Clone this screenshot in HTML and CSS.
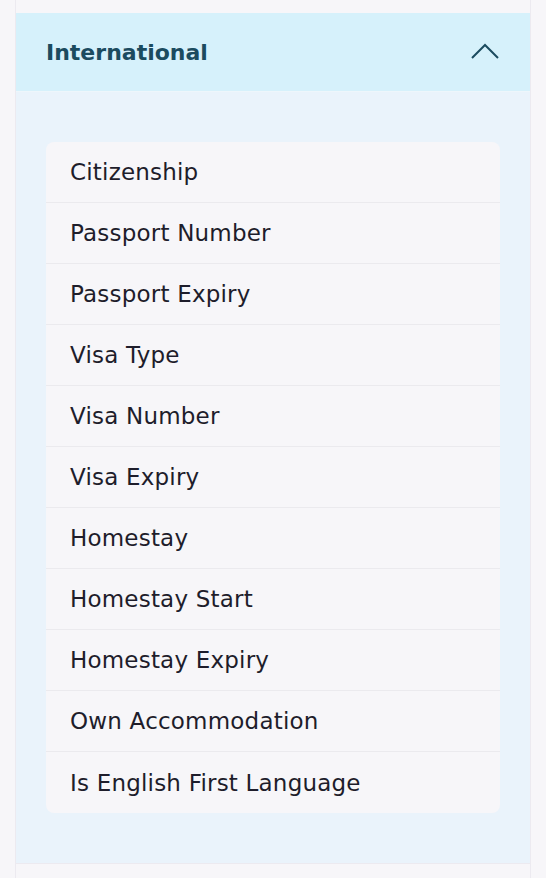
FILE: index.html
```html
<!DOCTYPE html>
<html lang="en">
<head>
  <meta charset="UTF-8" />
  <meta name="viewport" content="width=device-width, initial-scale=1.0"/>
  <title>International</title>
  <link rel="stylesheet" href="styles.css">
</head>
<body>
  <div class="panel">
    <div class="panel-top"></div>
    <button class="accordion-header">
      <span>International</span>
      <svg class="chevron" width="28" height="16" viewBox="0 0 28 16" fill="none">
        <path d="M1 15 L14 2 L27 15" stroke="#1b4b5f" stroke-width="2"/>
      </svg>
    </button>
    <div class="accordion-body">
      <ul class="field-list">
        <li>Citizenship</li>
        <li>Passport Number</li>
        <li>Passport Expiry</li>
        <li>Visa Type</li>
        <li>Visa Number</li>
        <li>Visa Expiry</li>
        <li>Homestay</li>
        <li>Homestay Start</li>
        <li>Homestay Expiry</li>
        <li>Own Accommodation</li>
        <li>Is English First Language</li>
      </ul>
    </div>
    <div class="panel-bottom"></div>
  </div>
</body>
</html>
```

FILE: styles.css
```css
* {
  margin: 0;
  padding: 0;
  box-sizing: border-box;
}

body {
  font-family: "DejaVu Sans", "Open Sans", sans-serif;
  background: #f7f6f9;
  color: #1e1d2b;
}

.panel {
  margin: 0 15px;
  border-left: 1px solid #eceaf0;
  border-right: 1px solid #eceaf0;
  min-height: 878px;
}

.panel-top {
  height: 13px;
}

.accordion-header {
  width: 100%;
  height: 79px;
  display: flex;
  align-items: center;
  justify-content: space-between;
  padding: 0 31px 0 30px;
  background: #d6f1fb;
  border: none;
  border-bottom: 1px solid #eef6fb;
  font-family: inherit;
  font-size: 22px;
  font-weight: 700;
  color: #1b4b5f;
  cursor: pointer;
}

.chevron {
  margin-top: -2px;
}

.accordion-body {
  background: #eaf3fb;
  padding: 50px 30px 50px;
}

.field-list {
  list-style: none;
  background: #f7f6f9;
  border-radius: 8px;
}

.field-list li {
  height: 61px;
  display: flex;
  align-items: center;
  padding: 0 24px;
  font-size: 23px;
  letter-spacing: 0.2px;
  border-bottom: 1px solid #ebeaee;
}

.field-list li:last-child {
  border-bottom: none;
}

.panel-bottom {
  border-top: 1px solid #eceaf0;
}
```
